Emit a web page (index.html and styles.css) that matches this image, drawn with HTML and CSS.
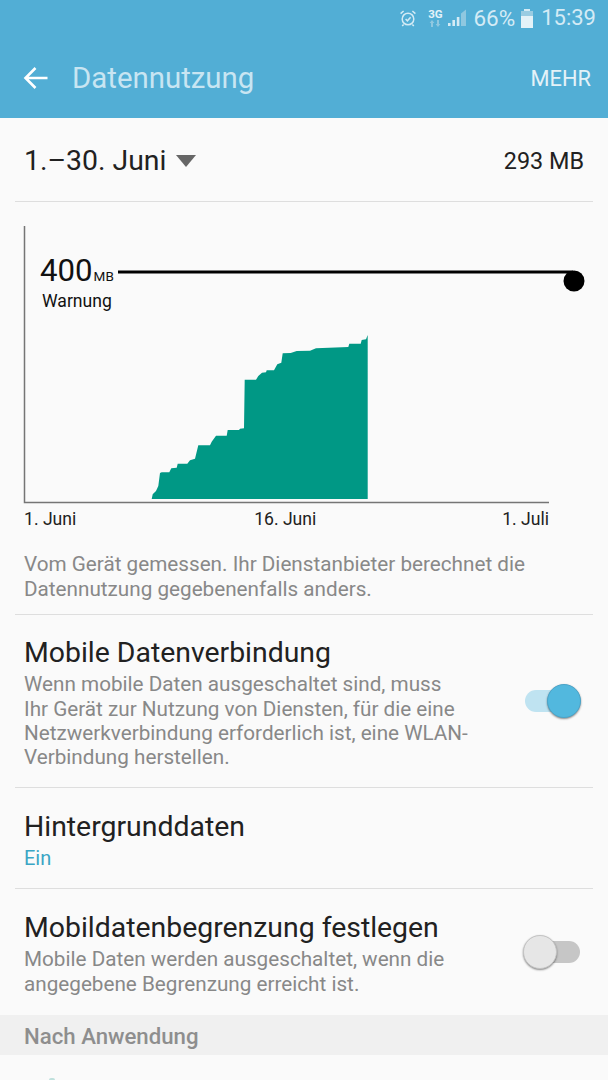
FILE: index.html
```html
<!DOCTYPE html>
<html lang="de">
<head>
<meta charset="utf-8">
<title>Datennutzung</title>
<link rel="stylesheet" href="styles.css">
</head>
<body>
<header class="header">
  <div class="status">
    <svg class="ico-alarm" width="18" height="18" viewBox="0 0 18 18" fill="none" stroke="#d4ebf5" stroke-width="1.5"><circle cx="9" cy="10" r="5.8"/><path d="M6.6 10l1.8 1.8 3.2-3.6"/><path d="M1.6 4.6L4.6 2M16.4 4.6L13.4 2M4.6 15.4l-1.4 1.6M13.4 15.4l1.4 1.6"/></svg>
    <span class="net"><span class="net-3g">3G</span><svg width="12" height="7" viewBox="0 0 12 7" fill="#8fc8e0"><path d="M3 0L5.4 3H4v4H2V3H.6zM9 7L6.6 4H8V0h2v4h1.4z"/></svg></span>
    <svg class="ico-signal" width="18" height="18" viewBox="0 0 18 18"><path d="M13 4.6L18 .6V17h-5z" fill="#8fc8e0"/><rect x="0" y="14" width="2.6" height="3" fill="#d4ebf5"/><rect x="4.4" y="11" width="2.6" height="6" fill="#d4ebf5"/><rect x="8.8" y="8" width="2.6" height="9" fill="#d4ebf5"/></svg>
    <span class="pct">66%</span>
    <svg class="ico-batt" width="12" height="19" viewBox="0 0 12 19"><rect x="3" y="0" width="6" height="2" fill="#d4ebf5"/><rect x="0" y="2" width="12" height="6" fill="#9accE2"/><rect x="0" y="7" width="12" height="12" fill="#e4f2f8"/></svg>
    <span class="time">15:39</span>
  </div>
  <div class="appbar">
    <svg class="back" width="26" height="24" viewBox="0 0 26 24" fill="none" stroke="#fff" stroke-width="2.6"><path d="M24.500 12H2.500M12.500 2L2.500 12l10 10"/></svg>
    <h1 class="title">Datennutzung</h1>
    <span class="more">MEHR</span>
  </div>
</header>
<main class="content">
  <section class="period">
    <div class="period-left"><span class="period-label">1.–30. Juni</span><span class="caret"></span></div>
    <span class="period-total">293 MB</span>
  </section>
  <section class="chart">
    <svg class="plot" width="608" height="306" viewBox="0 201 608 306">
      <path class="axis" d="M24.500 225V501.500H549"/>
      <path class="area" d="M151.700 498L152.700 493.300L156 490L158.300 485L160 472L161.700 471.300H169.300L171.300 467.300L176.700 466.700L177.700 462.700H187.300L190 459.300L195 457.700L198.300 444.300H210L211.700 440.700L216 434.700H226.700L227.700 429H239L240 427.700L244 427.300L244.700 378.700H256L258.300 375L262 371.700L266 371.300L266.700 369.300H274L277.300 363.300L281.300 361.700L282.700 352.300L290.700 352L296.700 350L310 349.700L316 347.300L348.300 346L349.300 342.700H360.700L361.700 339L366 338.300L367.700 334V498Z"/>
      <path class="limit" d="M118 271H573"/>
      <circle class="knob" cx="574" cy="280" r="10.500"/>
    </svg>
    <div class="warn">
      <div class="warn-num">400<span class="warn-unit">MB</span></div>
      <div class="warn-label">Warnung</div>
    </div>
    <div class="xlabels"><span>1. Juni</span><span class="x-mid">16. Juni</span><span>1. Juli</span></div>
  </section>
  <p class="note">Vom Gerät gemessen. Ihr Dienstanbieter berechnet die Datennutzung gegebenenfalls anders.</p>
  <section class="row row-mobile">
    <div class="row-text">
      <h2 class="row-title">Mobile Datenverbindung</h2>
      <p class="row-desc">Wenn mobile Daten ausgeschaltet sind, muss<br>Ihr Gerät zur Nutzung von Diensten, für die eine<br>Netzwerkverbindung erforderlich ist, eine WLAN-<br>Verbindung herstellen.</p>
    </div>
    <span class="toggle on"><span class="thumb"></span></span>
  </section>
  <section class="row row-bg">
    <div class="row-text">
      <h2 class="row-title">Hintergrunddaten</h2>
      <p class="row-state">Ein</p>
    </div>
  </section>
  <section class="row row-limit">
    <div class="row-text">
      <h2 class="row-title">Mobildatenbegrenzung festlegen</h2>
      <p class="row-desc">Mobile Daten werden ausgeschaltet, wenn die<br>angegebene Begrenzung erreicht ist.</p>
    </div>
    <span class="toggle off"><span class="thumb"></span></span>
  </section>
  <div class="subhead">Nach Anwendung</div>
  <div class="app-row"><span class="app-icon"></span></div>
</main>
</body>
</html>
```
FILE: styles.css
```css
* { box-sizing: border-box; }
html, body { margin: 0; padding: 0; }
body {
  width: 608px;
  height: 1080px;
  overflow: hidden;
  background: #fafafa;
  font-family: Roboto, "Liberation Sans", sans-serif;
  color: #212121;
}
h1, h2, p { margin: 0; font-weight: 400; }

.header { height: 118px; background: #52aed5; }
.status {
  height: 38px;
  display: flex;
  align-items: center;
  justify-content: flex-end;
  padding: 0 12px 2px 0;
  color: #d4ebf5;
}
.ico-alarm { margin-right: 11px; }
.net { display: flex; flex-direction: column; align-items: center; margin-right: 6px; width: 14px; }
.net-3g { font-size: 11.500px; line-height: 11px; font-weight: 700; color: #e4f2f8; }
.ico-signal { margin-right: 7px; }
.pct { font-size: 22.500px; line-height: 26px; margin-right: 6px; }
.ico-batt { margin-right: 8px; }
.time { font-size: 22px; line-height: 26px; }

.appbar { height: 80px; display: flex; align-items: center; padding: 0 17px 0 23px; }
.back { margin-right: 23px; }
.title { flex: 1; font-size: 29.400px; color: #c8e5f2; }
.more { font-size: 21.800px; color: #e4f2f8; }

.content { display: flex; flex-direction: column; }
.period {
  height: 84px;
  margin: 0 15px;
  padding: 2px 9px 0;
  display: flex;
  align-items: center;
  justify-content: space-between;
  border-bottom: 1px solid #dedede;
}
.period-left { display: flex; align-items: center; gap: 10px; }
.period-label { font-size: 28.400px; }
.caret { width: 0; height: 0; border-left: 10px solid transparent; border-right: 10px solid transparent; border-top: 12px solid #666; }
.period-total { font-size: 23.400px; }

.chart { position: relative; height: 350px; }
.plot { display: block; }
.axis { fill: none; stroke: #757575; stroke-width: 1.500; }
.area { fill: #009885; }
.limit { stroke: #000; stroke-width: 3; fill: none; }
.knob { fill: #000; }
.warn { position: absolute; left: 40px; top: 52px; }
.warn-num { font-size: 31.200px; line-height: 34px; color: #111; }
.warn-unit { font-size: 13.500px; margin-left: 1px; }
.warn-label { font-size: 17.600px; line-height: 20px; margin: -2px 0 0 2px; color: #111; }
.xlabels { display: flex; justify-content: space-between; margin: 0 59px 0 24px; font-size: 17.600px; line-height: 22px; }
.x-mid { margin-right: 8px; }

.note { margin: 0 15px; padding: 0 9px 12px; font-size: 20.700px; line-height: 25px; color: #888; border-bottom: 1px solid #dedede; }
.row { margin: 0 15px; padding: 0 13px 0 9px; display: flex; align-items: center; justify-content: space-between; border-bottom: 1px solid #dedede; }
.row-text { padding-top: 2px; }
.row-title { font-size: 28.400px; line-height: 38px; color: #212121; }
.row-desc { font-size: 20.700px; line-height: 24.300px; color: #888; }
.row-state { font-size: 20px; line-height: 28px; margin-top: -2px; color: #3aa5c4; }
.row-mobile { height: 173px; }
.row-bg { height: 101px; padding-top: 2px; }
.row-limit { height: 126px; border-bottom: 0; }
.row-limit .row-text { margin-top: -1px; }

.toggle { position: relative; display: block; flex: none; width: 55px; height: 22px; border-radius: 11px; }
.toggle.on { background: #bfe3f1; }
.toggle.off { background: #c6c6c6; }
.thumb { position: absolute; top: -6px; width: 34px; height: 34px; border-radius: 50%; box-shadow: 0 1px 2px rgba(0,0,0,.45); }
.on .thumb { right: -1px; background: #52b8de; border: 1px solid #4ba4c9; }
.off .thumb { left: -2px; background: #e6e6e6; border: 1px solid #c4c4c4; }

.subhead { height: 40px; padding: 1px 0 0 24px; background: #f0f0f0; font-size: 22.200px; font-weight: 500; line-height: 40px; color: #8e8e8e; }
.app-row { padding: 23px 0 0 49px; }
.app-icon { display: block; width: 6px; height: 12px; border-radius: 2px 2px 0 0; background: #bfe0dc; }
```
